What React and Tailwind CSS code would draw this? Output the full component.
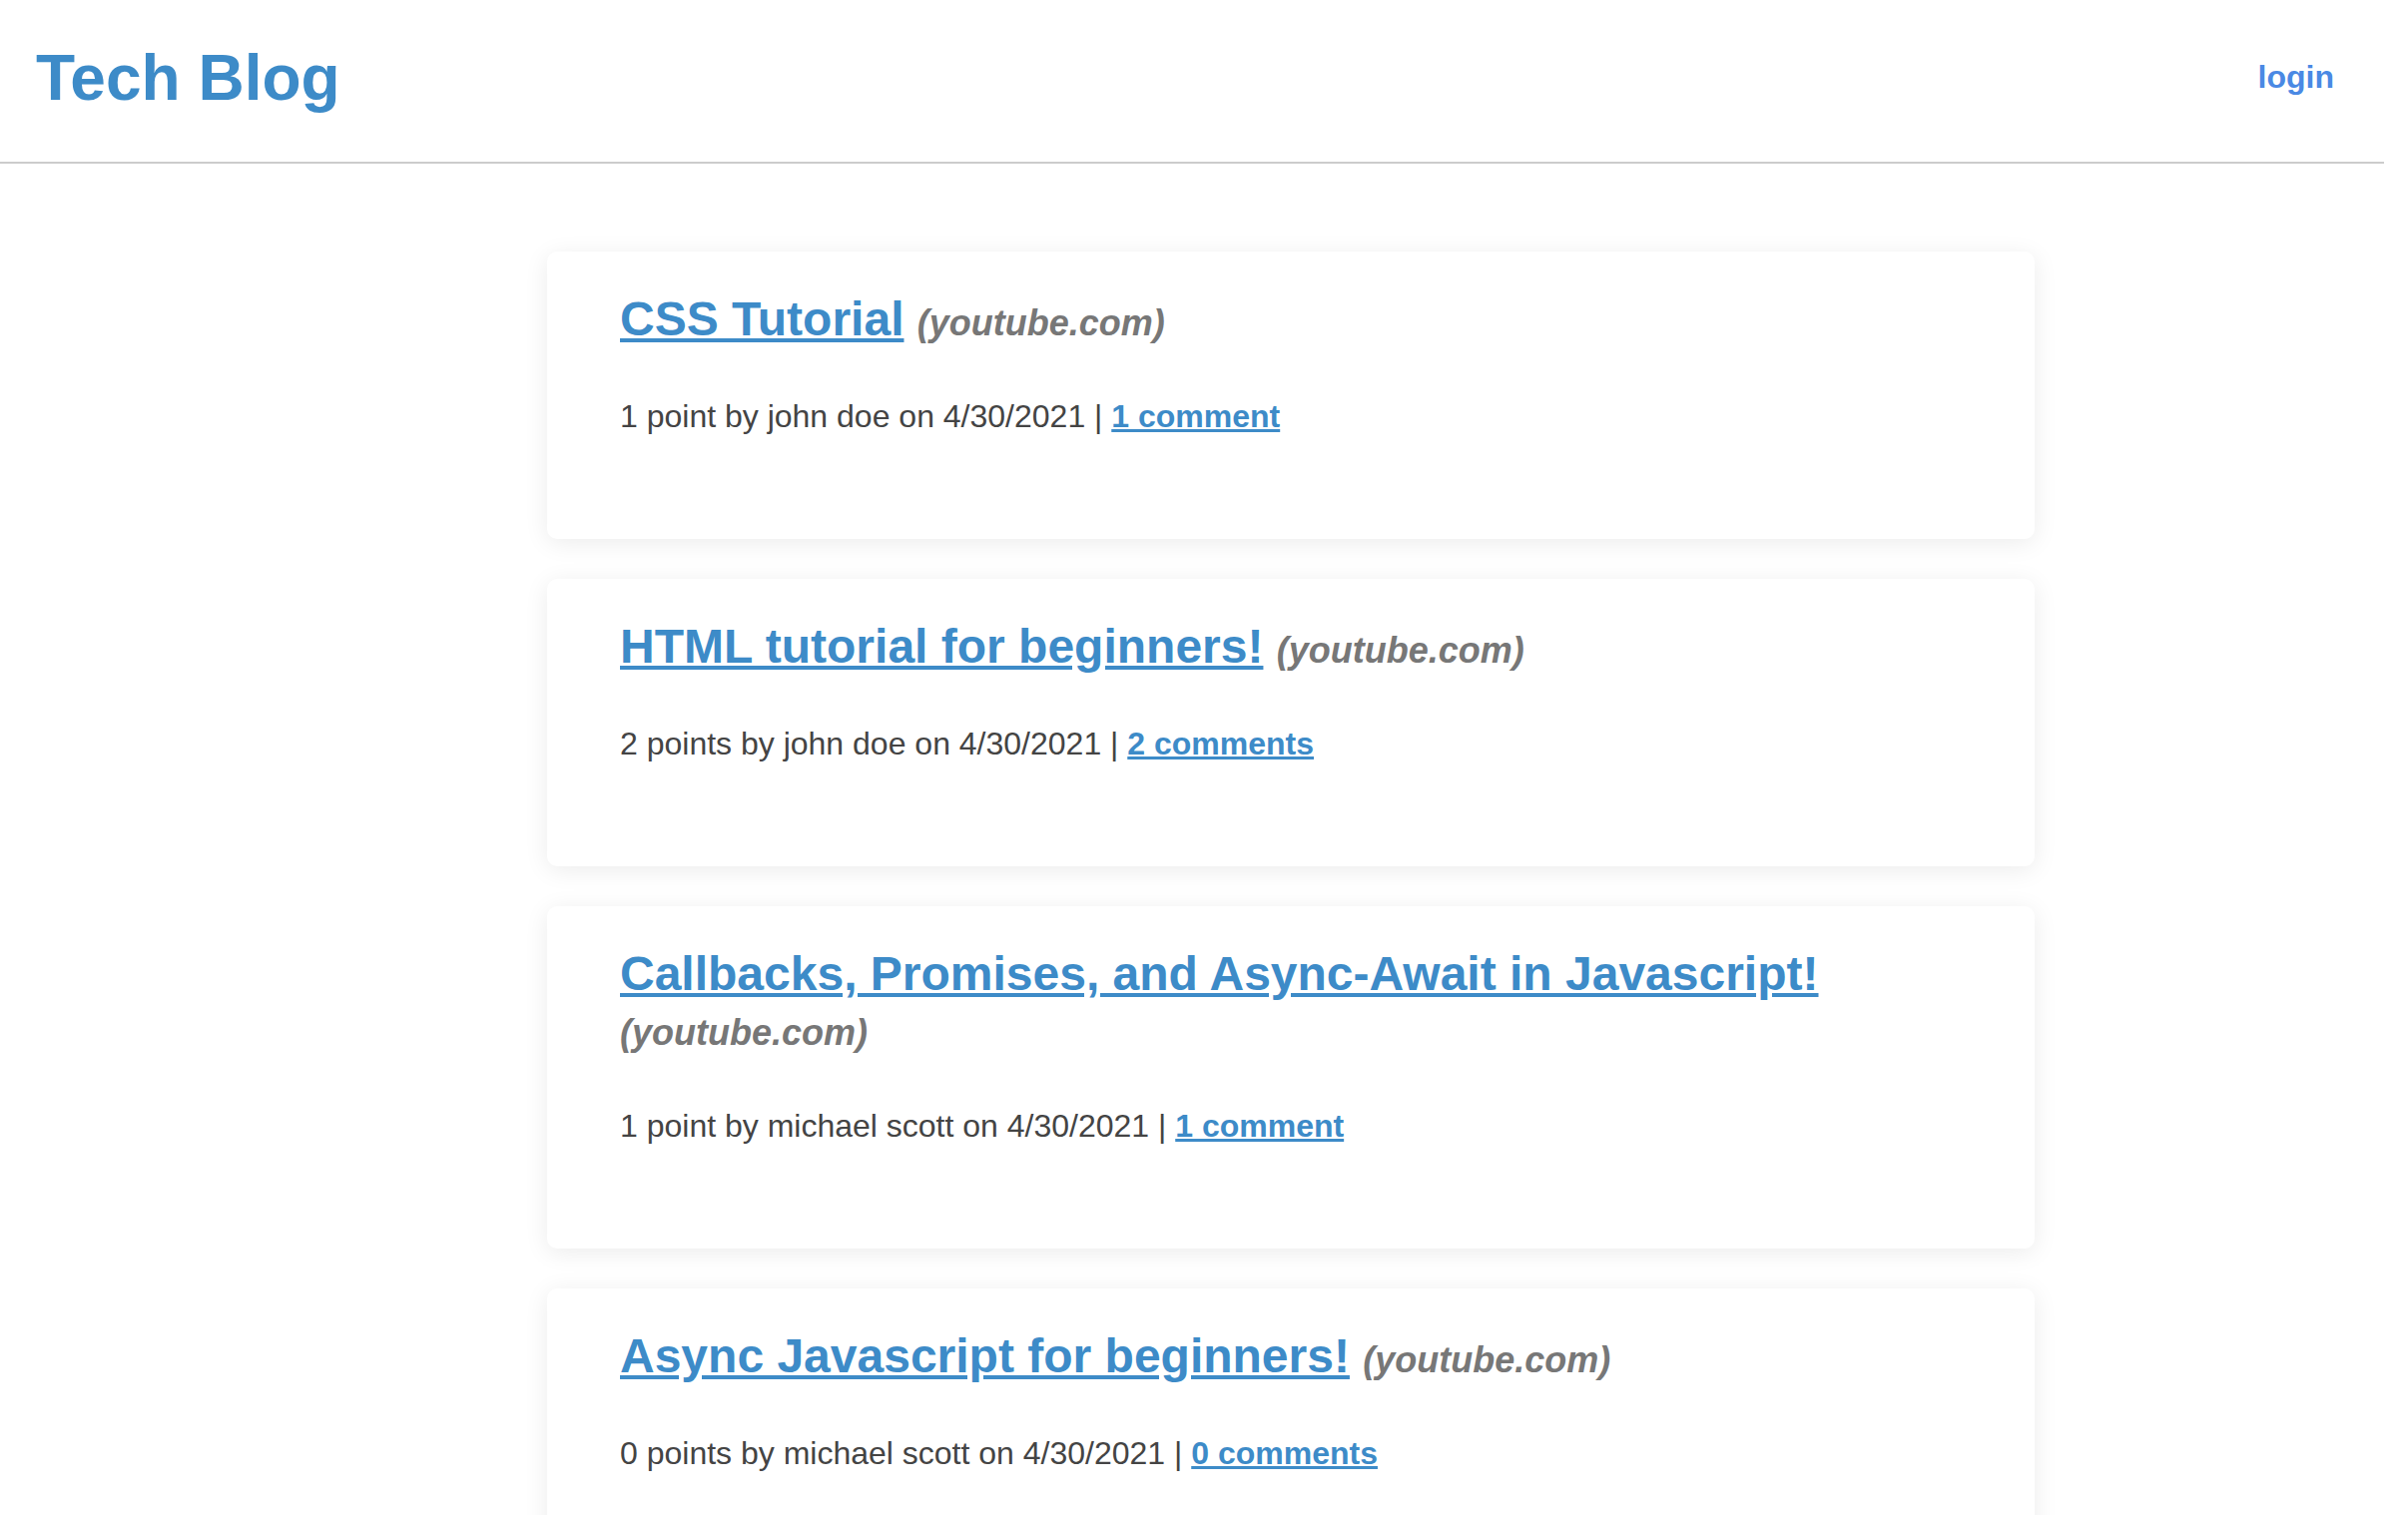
import React from 'react';

const posts = [
  { title: 'CSS Tutorial', points: '1 point', author: 'john doe', comments: '1 comment' },
  { title: 'HTML tutorial for beginners!', points: '2 points', author: 'john doe', comments: '2 comments' },
  { title: 'Callbacks, Promises, and Async-Await in Javascript!', points: '1 point', author: 'michael scott', comments: '1 comment' },
  { title: 'Async Javascript for beginners!', points: '0 points', author: 'michael scott', comments: '0 comments' },
];

const PostCard = ({ post }) => (
  <div className="rounded-[10px] bg-white px-[73px] pt-[40px] pb-[104px] shadow-[0_4px_24px_rgba(0,0,0,0.08)]">
    <h2 className="text-[48px] leading-[55px]">
      <a href="#" className="font-bold text-[#3d8bc8] underline">{post.title}</a>{' '}
      <span className="text-[36px] font-bold italic leading-none text-[#777]">(youtube.com)</span>
    </h2>
    <p className="mt-[52px] text-[32px] leading-[37px] text-[#444]">
      {post.points} by {post.author} on 4/30/2021 |{' '}
      <a href="#" className="font-bold text-[#3d8bc8] underline">{post.comments}</a>
    </p>
  </div>
);

export default function App() {
  return (
    <div className="min-h-screen bg-white font-['Liberation_Sans',Arial,sans-serif]">
      <header className="flex h-[164px] w-[2388px] items-start justify-between border-b-2 border-[#ccc]">
        <h1 className="pl-[36px] pt-[46px] text-[64px] font-bold leading-[64px] text-[#3d8bc8]">Tech Blog</h1>
        <a href="#" className="pr-[50px] pt-[61px] text-[32px] font-bold leading-[32px] text-[#4a89e4]">login</a>
      </header>
      <main className="ml-[548px] flex w-[1490px] flex-col gap-[40px] pt-[88px] pb-[40px]">
        {posts.map((p, i) => <PostCard key={i} post={p} />)}
      </main>
    </div>
  );
}
